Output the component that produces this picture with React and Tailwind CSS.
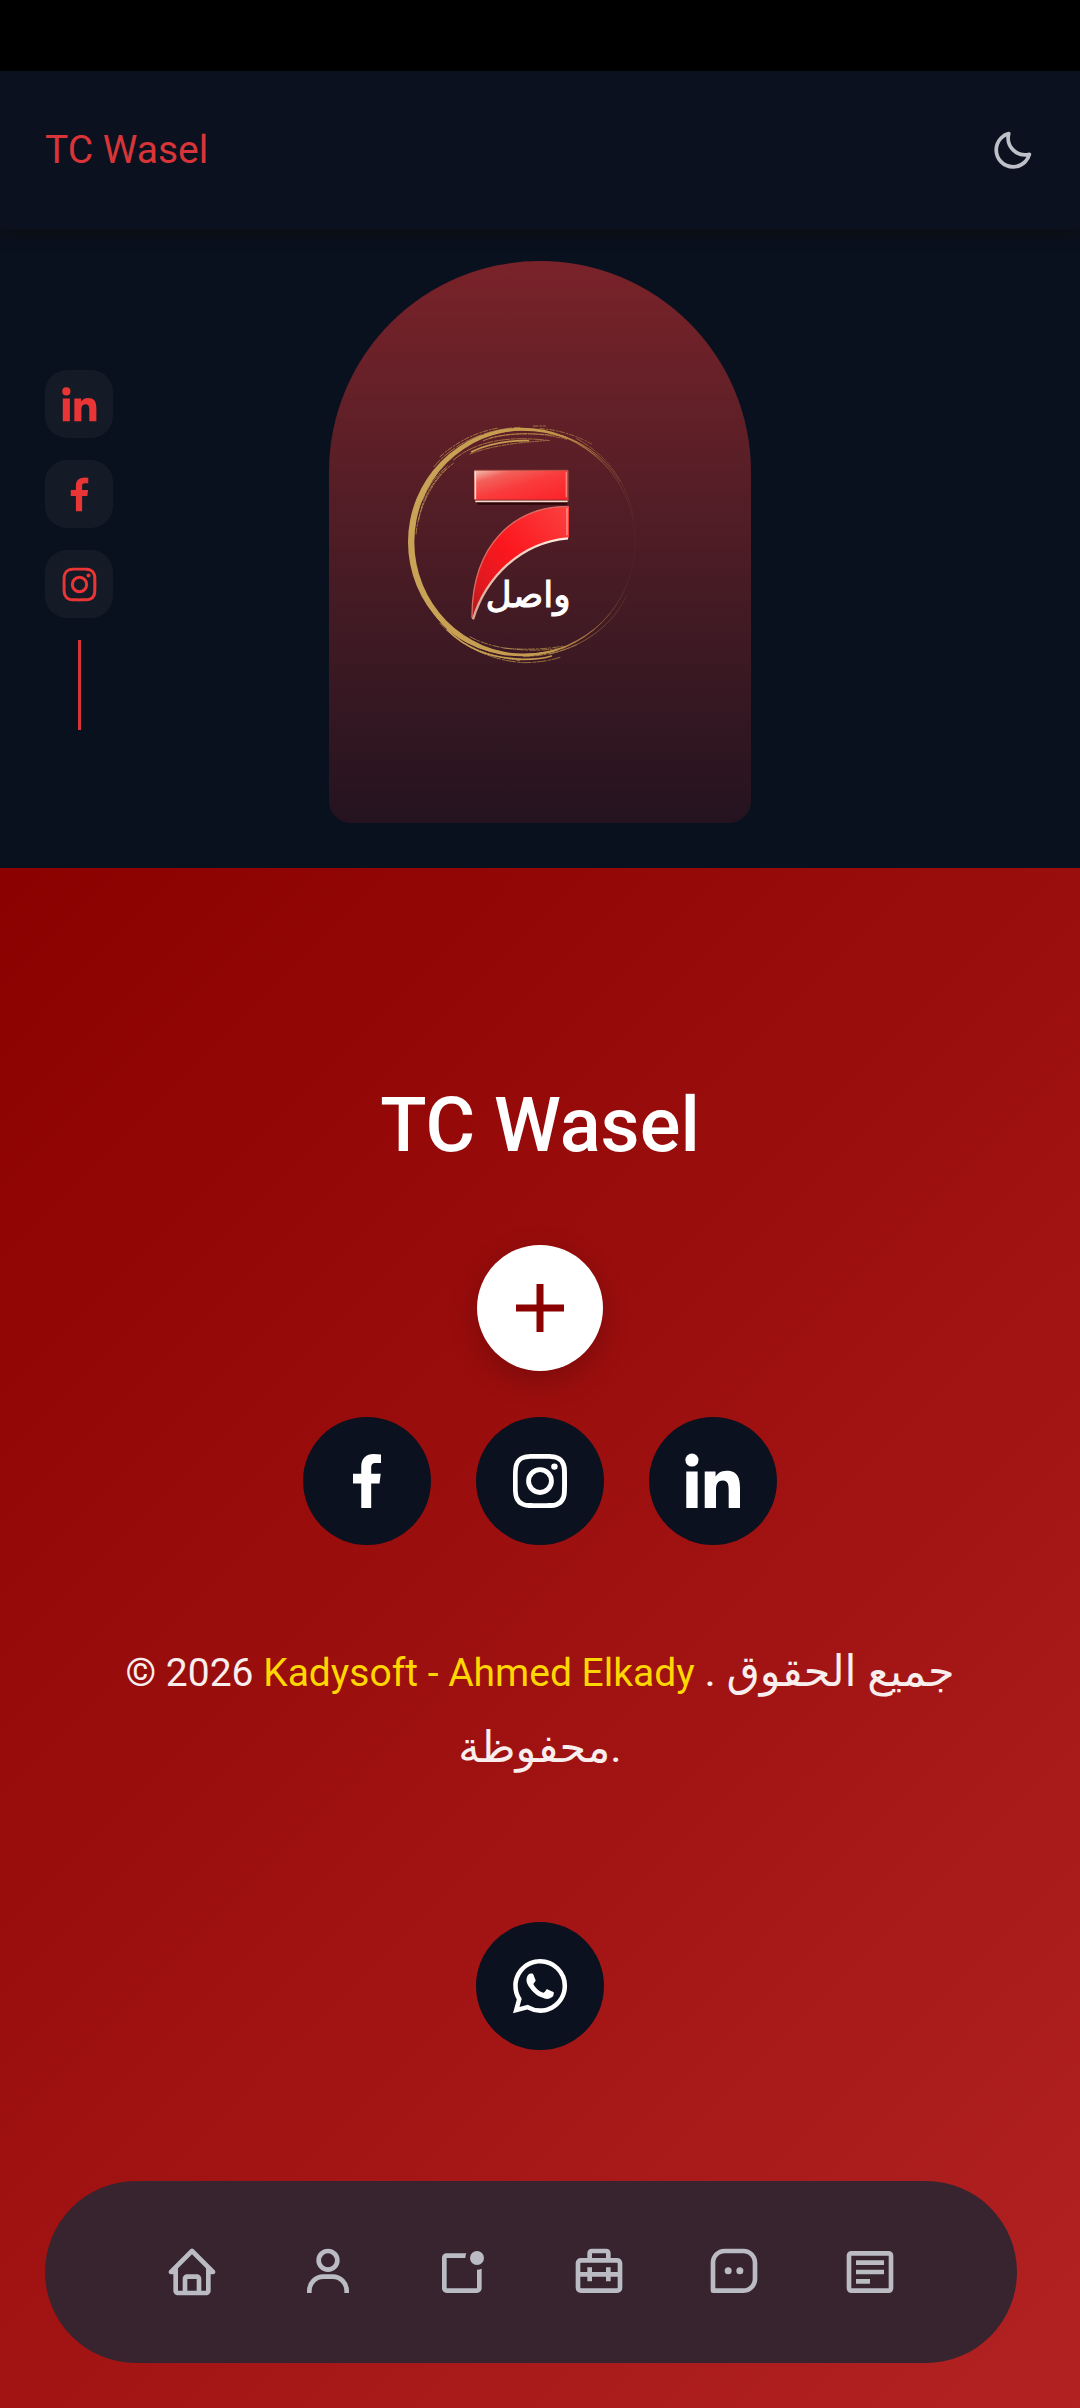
import React from "react";
import {
  BiHome,
  BiLogoFacebook,
  BiLogoInstagram,
  BiLogoLinkedin,
  BiLogoWhatsapp,
  BiMoon,
  BiNotification,
  BiUser,
} from "react-icons/bi";

function ToolboxIcon({ className }) {
  return (
    <svg viewBox="0 0 24 24" className={className} fill="none" stroke="currentColor" strokeWidth="2" strokeLinejoin="round" aria-hidden="true">
      <path d="M3 8.2c0-.7.5-1.200 1.200-1.200h15.600c.7 0 1.200.5 1.200 1.200v10.600c0 .7-.5 1.200-1.200 1.200H4.200c-.7 0-1.200-.5-1.200-1.200z" />
      <path d="M8 7V4c0-.6.4-1 1-1h6c.6 0 1 .4 1 1v3M3 13h18M8 10v6M16 10v6" />
    </svg>
  );
}

function ChatIcon({ className }) {
  return (
    <svg viewBox="0 0 24 24" className={className} fill="currentColor" aria-hidden="true">
      <path d="M16 2H8C4.691 2 2 4.691 2 8v12a1 1 0 0 0 1 1h13c3.309 0 6-2.691 6-6V8c0-3.309-2.691-6-6-6zm4 13c0 2.206-1.794 4-4 4H4V8c0-2.206 1.794-4 4-4h8c2.206 0 4 1.794 4 4v7z" />
      <circle cx="9.5" cy="11.500" r="1.5" />
      <circle cx="14.5" cy="11.500" r="1.5" />
    </svg>
  );
}

function ArticleIcon({ className }) {
  return (
    <svg viewBox="0 0 24 24" className={className} fill="currentColor" aria-hidden="true">
      <path fillRule="evenodd" d="M4 3h16a2 2 0 0 1 2 2v14a2 2 0 0 1-2 2H4a2 2 0 0 1-2-2V5a2 2 0 0 1 2-2zM4 5v14h16V5z" />
      <path d="M6 7h12v2H6zM6 11h12v2H6zM6 15h6v2H6z" />
    </svg>
  );
}

function WaselLogo() {
  return (
    <svg viewBox="0 0 780 810" className="w-[260px] h-[270px]" role="img" aria-label="واصل">
      <defs>
        <linearGradient id="gold" gradientUnits="userSpaceOnUse" x1="50" y1="0" x2="740" y2="0">
          <stop offset="0" stopColor="#c9a457" />
          <stop offset="0.6" stopColor="#c4994d" />
          <stop offset="0.8" stopColor="#b98646" stopOpacity="0.8" />
          <stop offset="1" stopColor="#a06a3c" stopOpacity="0.1" />
        </linearGradient>
        <linearGradient id="bar" x1="0" y1="0" x2="1" y2="1">
          <stop offset="0" stopColor="#f3c3b4" />
          <stop offset="0.22" stopColor="#f2605a" />
          <stop offset="0.5" stopColor="#fa3b3c" />
          <stop offset="1" stopColor="#fb2228" />
        </linearGradient>
        <linearGradient id="swoosh" x1="1" y1="0" x2="0" y2="1">
          <stop offset="0" stopColor="#fb4140" />
          <stop offset="0.5" stopColor="#fc171e" />
          <stop offset="0.8" stopColor="#e0191f" />
          <stop offset="1" stopColor="#a81a1f" />
        </linearGradient>
        <linearGradient id="edge" x1="1" y1="0" x2="0" y2="1">
          <stop offset="0" stopColor="#fff0e4" />
          <stop offset="1" stopColor="#d9a08f" />
        </linearGradient>
      </defs>
      <path
        fill="url(#gold)"
        fillRule="evenodd"
        d="M54 396a341 343 0 1 0 682 0a341 343 0 1 0-682 0zM73 396a331 335 0 1 0 662 0a331 335 0 1 0-662 0z"
      />
      <g fill="none" stroke="url(#gold)" strokeLinecap="round">
        <path strokeWidth="2" strokeDasharray="26 5 9 4 40 7" d="M132 170C190 100 290 56 390 52" />
        <path strokeWidth="2" strokeDasharray="14 6 5 5" d="M150 140C205 92 260 66 325 54M430 48H466M450 56C500 58 560 76 605 102" />
        <path strokeWidth="5" d="M245 125C300 100 350 91 415 92" />
        <path strokeWidth="5" d="M150 175C215 95 300 62 395 60C440 60 490 68 530 84" />
        <path strokeWidth="2" strokeDasharray="30 5 12 4" d="M190 150C250 100 340 74 480 92M280 92C340 68 420 68 520 78" />
        <path strokeWidth="2" strokeDasharray="12 4 4 5" d="M240 132C300 108 380 98 465 92M300 84C380 64 450 68 530 88" />
        <path strokeWidth="3" d="M510 76C590 98 655 155 690 215" />
        <path strokeWidth="2" strokeDasharray="18 5" d="M560 86C630 124 680 180 705 240C718 270 726 298 731 322" />
        <path strokeWidth="2" strokeDasharray="18 5 6 5" d="M78 372C86 290 130 205 190 160M86 330C94 270 130 212 168 176M98 270C112 230 140 196 172 168" />
        <path strokeWidth="2" strokeDasharray="28 6 8 4" d="M128 600C180 690 280 750 400 758C440 758 480 752 510 742" />
        <path strokeWidth="5" d="M172 660C230 718 300 744 400 748C430 748 460 746 484 738" />
        <path strokeWidth="5" d="M140 620C200 696 290 732 395 734C430 734 470 728 500 720" />
        <path strokeWidth="2" strokeDasharray="20 5 6 6" d="M150 640C210 706 290 738 390 752M240 680C310 720 420 728 520 714M340 714C400 720 470 718 520 708M400 740C470 738 520 722 560 704" />
        <path strokeWidth="2" d="M480 732C590 706 670 640 708 560" />
      </g>

      <path d="M258 272h276l-4 12H264z" fill="#2b0508" />
      <path d="M253 181h281v88H253z" fill="url(#bar)" />
      <path d="M253 181h281v92" fill="none" stroke="#b9524a" strokeWidth="3" />
      <path d="M256 184v84M256 274h277" fill="none" stroke="#ffd8c8" strokeWidth="5" />
      <path d="M529 186v76" stroke="#ff8077" strokeWidth="4" />

      <path d="M537 289C380 284 240 400 246 628C290 500 390 394 537 383z" fill="url(#swoosh)" />
      <path d="M536 290C380 285 244 400 246 624" fill="none" stroke="#d96a60" strokeWidth="4" />
      <path d="M249 628C288 502 390 398 534 385" fill="none" stroke="url(#edge)" strokeWidth="7" />
      <path d="M531 294v82" stroke="#ff9c90" strokeWidth="4" />

      <text
        x="414"
        y="590"
        textAnchor="middle"
        direction="rtl"
        fill="#ffffff"
        stroke="#ffffff"
        strokeWidth="3"
        fontSize="108"
        fontFamily="'DejaVu Sans', sans-serif"
      >
        واصل
      </text>
    </svg>
  );
}

const sideLinks = [
  { label: "LinkedIn", Icon: BiLogoLinkedin },
  { label: "Facebook", Icon: BiLogoFacebook },
  { label: "Instagram", Icon: BiLogoInstagram },
];

const footerLinks = [
  { label: "Facebook", Icon: BiLogoFacebook },
  { label: "Instagram", Icon: BiLogoInstagram },
  { label: "LinkedIn", Icon: BiLogoLinkedin },
];

const navLinks = [
  { label: "Home", Icon: BiHome },
  { label: "About", Icon: BiUser },
  { label: "Skills", Icon: BiNotification },
  { label: "Services", Icon: ToolboxIcon },
  { label: "Contact", Icon: ChatIcon },
  { label: "Articles", Icon: ArticleIcon },
];

function RoundLink({ label, Icon }) {
  return (
    <a href="#" aria-label={label} className="flex size-32 items-center justify-center rounded-full bg-[#0b111e] text-white">
      <Icon className="size-[72px]" />
    </a>
  );
}

export default function App() {
  return (
    <div className="bg-[#0a111e] font-[Roboto,'DejaVu_Sans',sans-serif]">
      <div className="h-[71px] bg-black" />

      <header className="relative flex h-[158px] items-center justify-between bg-[#0b111e] px-[45px] shadow-[0_6px_12px_rgba(14,14,14,0.6)]">
        <a href="#" className="text-[39px] leading-[48px] text-[#d83539]">
          TC Wasel
        </a>
        <button type="button" aria-label="Toggle theme" className="text-[#bfc1c9]">
          <BiMoon className="size-[45px]" />
        </button>
      </header>

      <main className="grid grid-cols-[1fr_422px_1fr] px-[45px] pt-8 pb-[45px]">
        <div className="mt-[109px] flex w-[68px] flex-col items-center gap-[22px]">
          {sideLinks.map(({ label, Icon }) => (
            <a key={label} href="#" aria-label={label} className="flex size-[68px] items-center justify-center rounded-[22px] bg-[#151b26] text-[#e93535]">
              <Icon className="size-[45px]" />
            </a>
          ))}
          <span className="h-[90px] w-[3px] bg-[#d63439]" />
        </div>
        <div className="h-[562px] rounded-t-[211px] rounded-b-[22px] bg-linear-to-b from-[#7a2229] to-[#24131f] pt-[149px] pl-[61px]">
          <WaselLogo />
        </div>
      </main>

      <footer className="flex flex-col items-center bg-[linear-gradient(135deg,#8b0000,#b22222)] px-[45px] pt-[212px] pb-[45px] text-white">
        <h1 className="text-[76px] leading-[90px] font-medium">TC Wasel</h1>

        <button
          type="button"
          aria-label="Add"
          className="mt-[75px] flex size-[126px] items-center justify-center rounded-full bg-white text-[#8b0000] shadow-[0_9px_30px_rgba(0,0,0,0.2)]"
        >
          <svg viewBox="0 0 48 48" className="size-12" stroke="currentColor" strokeWidth="7" aria-hidden="true">
            <path d="M24 0v48M0 24h48" />
          </svg>
        </button>

        <div className="mt-[46px] flex gap-[45px]">
          {footerLinks.map((link) => (
            <RoundLink key={link.label} {...link} />
          ))}
        </div>

        <p className="mt-[90px] text-center text-[39px] leading-[76px] text-[#f8eeee]">
          © 2026{" "}
          <a href="#" className="text-[#ffd700]">
            Kadysoft - Ahmed Elkady
          </a>{" "}
          <span className="text-[43px] leading-[0]">
            . جميع الحقوق
            <br />
            محفوظة.
          </span>
        </p>

        <div className="mt-[135px]">
          <RoundLink label="WhatsApp" Icon={BiLogoWhatsapp} />
        </div>

        <nav className="mt-[131px] flex h-[182px] w-full pr-[18px]">
          <ul className="flex flex-1 items-center justify-between rounded-full bg-[#37242f] px-[119px]">
            {navLinks.map(({ label, Icon }) => (
              <li key={label}>
                <a href="#" aria-label={label} className="block text-[#babbc3]">
                  <Icon className="size-14" />
                </a>
              </li>
            ))}
          </ul>
        </nav>
      </footer>
    </div>
  );
}
